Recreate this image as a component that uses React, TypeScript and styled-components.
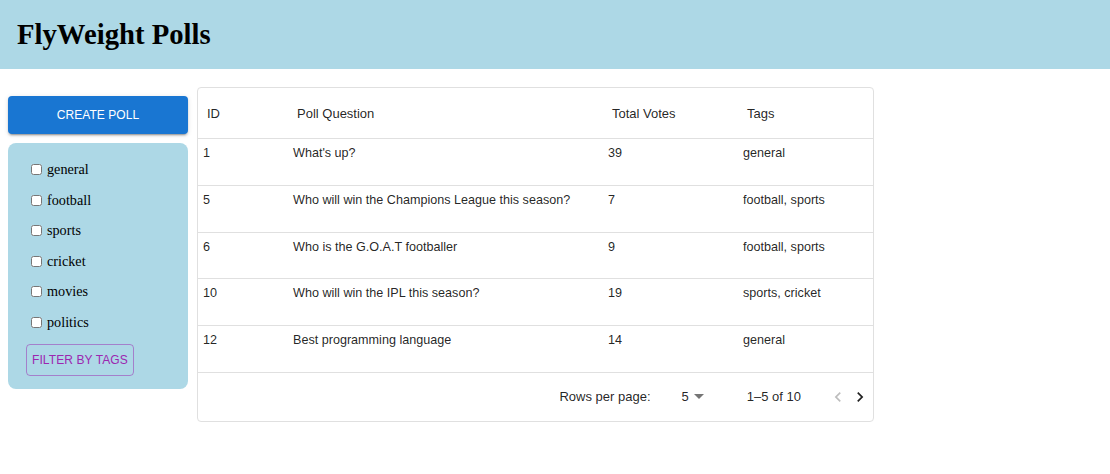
import React from "react";
import styled, { createGlobalStyle } from "styled-components";

const Global = createGlobalStyle`
  html, body { margin: 0; padding: 0; background: #fff; }
  body { font-family: "Liberation Serif", serif; }
`;

const Header = styled.header`
  background: #add8e6;
  padding: 16px 17px;
`;

const Title = styled.h1`
  margin: 0;
  font-family: "Liberation Serif", serif;
  font-size: 28.7px;
  font-weight: bold;
  line-height: 37px;
  color: #000;
`;

const Main = styled.main`
  display: flex;
  align-items: flex-start;
  gap: 9px;
  padding: 18px 8px;
`;

const Sidebar = styled.aside`
  width: 180px;
  padding-top: 9px;
  display: flex;
  flex-direction: column;
  gap: 9px;
`;

const PrimaryButton = styled.button`
  height: 38px;
  padding-top: 1px;
  border: none;
  border-radius: 4px;
  background: #1976d2;
  color: #fff;
  font-family: "Liberation Sans", Arial, sans-serif;
  font-size: 12px;
  letter-spacing: 0.05px;
  text-transform: uppercase;
  box-shadow: 0 3px 1px -2px rgba(0,0,0,0.2), 0 2px 2px 0 rgba(0,0,0,0.14), 0 1px 5px 0 rgba(0,0,0,0.12);
  cursor: pointer;
`;

const FilterBox = styled.div`
  background: #add8e6;
  border-radius: 8px;
  padding: 18px 18px 13px 18px;
  display: flex;
  flex-direction: column;
`;

const TagList = styled.div`
  display: flex;
  flex-direction: column;
  gap: 13.5px;
  padding-left: 5px;
`;

const TagLabel = styled.label`
  display: flex;
  align-items: center;
  height: 17px;
  font-family: "Liberation Serif", serif;
  font-size: 14.2px;
  color: #000;
`;

const Check = styled.input`
  width: 11px;
  height: 11px;
  margin: 0 5px 0 0;
`;

const OutlinedButton = styled.button`
  align-self: flex-start;
  margin-top: 13px;
  height: 32px;
  padding: 0 5px;
  border: 1px solid rgba(156, 39, 176, 0.5);
  border-radius: 4px;
  background: transparent;
  color: #9c27b0;
  font-family: "Liberation Sans", Arial, sans-serif;
  font-size: 12px;
  letter-spacing: 0.1px;
  text-transform: uppercase;
  cursor: pointer;
`;

const TableCard = styled.div`
  width: 675px;
  border: 1px solid #e0e0e0;
  border-radius: 4px;
  font-family: "Liberation Sans", Arial, sans-serif;
  font-size: 13px;
  color: rgba(0, 0, 0, 0.87);
`;

const Grid = styled.div`
  display: grid;
  grid-template-columns: 90px 315px 135px 1fr;
`;

const HeadCell = styled.div`
  height: 50px;
  display: flex;
  align-items: center;
  padding-left: 9px;
  border-bottom: 1px solid #e0e0e0;
`;

const BodyCell = styled.div`
  height: 46.8px;
  padding: 7px 5px 0;
  box-sizing: border-box;
  line-height: 15px;
  font-size: 12.6px;
  border-bottom: 1px solid #e0e0e0;
`;

const Footer = styled.div`
  height: 48px;
  display: flex;
  align-items: center;
  justify-content: flex-end;
  padding-right: 3px;
  box-sizing: border-box;
`;

const FooterLabel = styled.span`
  margin-right: 31px;
`;

const Select = styled.div`
  display: flex;
  align-items: center;
  gap: 5px;
  margin-right: 43px;
`;

const Range = styled.span`
  margin-right: 27px;
`;

const NavButton = styled.button<{ $disabled?: boolean }>`
  width: 20px;
  height: 24px;
  padding: 0;
  border: none;
  background: transparent;
  display: flex;
  align-items: center;
  justify-content: center;
  color: ${(p) => (p.$disabled ? "rgba(0,0,0,0.26)" : "rgba(0,0,0,0.87)")};
  & + & {
    margin-left: 2px;
  }
`;

const tags = ["general", "football", "sports", "cricket", "movies", "politics"];

const rows = [
  { id: 1, q: "What's up?", v: 39, t: "general" },
  { id: 5, q: "Who will win the Champions League this season?", v: 7, t: "football, sports" },
  { id: 6, q: "Who is the G.O.A.T footballer", v: 9, t: "football, sports" },
  { id: 10, q: "Who will win the IPL this season?", v: 19, t: "sports, cricket" },
  { id: 12, q: "Best programming language", v: 14, t: "general" },
];

const Chevron = ({ dir }: { dir: "left" | "right" }) => (
  <svg width="20" height="20" viewBox="0 0 24 24" fill="currentColor">
    {dir === "left" ? (
      <path d="M15.41 7.41 14 6l-6 6 6 6 1.41-1.41L10.83 12z" />
    ) : (
      <path d="M10 6 8.59 7.41 13.17 12l-4.58 4.59L10 18l6-6z" />
    )}
  </svg>
);

export default function App() {
  return (
    <>
      <Global />
      <Header>
        <Title>FlyWeight Polls</Title>
      </Header>
      <Main>
        <Sidebar>
          <PrimaryButton>Create Poll</PrimaryButton>
          <FilterBox>
            <TagList>
              {tags.map((t) => (
                <TagLabel key={t}>
                  <Check type="checkbox" />
                  {t}
                </TagLabel>
              ))}
            </TagList>
            <OutlinedButton>Filter by tags</OutlinedButton>
          </FilterBox>
        </Sidebar>
        <TableCard>
          <Grid>
            <HeadCell>ID</HeadCell>
            <HeadCell>Poll Question</HeadCell>
            <HeadCell>Total Votes</HeadCell>
            <HeadCell>Tags</HeadCell>
            {rows.map((r) => (
              <React.Fragment key={r.id}>
                <BodyCell>{r.id}</BodyCell>
                <BodyCell>{r.q}</BodyCell>
                <BodyCell>{r.v}</BodyCell>
                <BodyCell>{r.t}</BodyCell>
              </React.Fragment>
            ))}
          </Grid>
          <Footer>
            <FooterLabel>Rows per page:</FooterLabel>
            <Select>
              <span>5</span>
              <svg width="10" height="5" viewBox="0 0 10 5" fill="rgba(0,0,0,0.54)">
                <path d="M0 0 L10 0 L5 5 Z" />
              </svg>
            </Select>
            <Range>1–5 of 10</Range>
            <NavButton $disabled>
              <Chevron dir="left" />
            </NavButton>
            <NavButton>
              <Chevron dir="right" />
            </NavButton>
          </Footer>
        </TableCard>
      </Main>
    </>
  );
}
